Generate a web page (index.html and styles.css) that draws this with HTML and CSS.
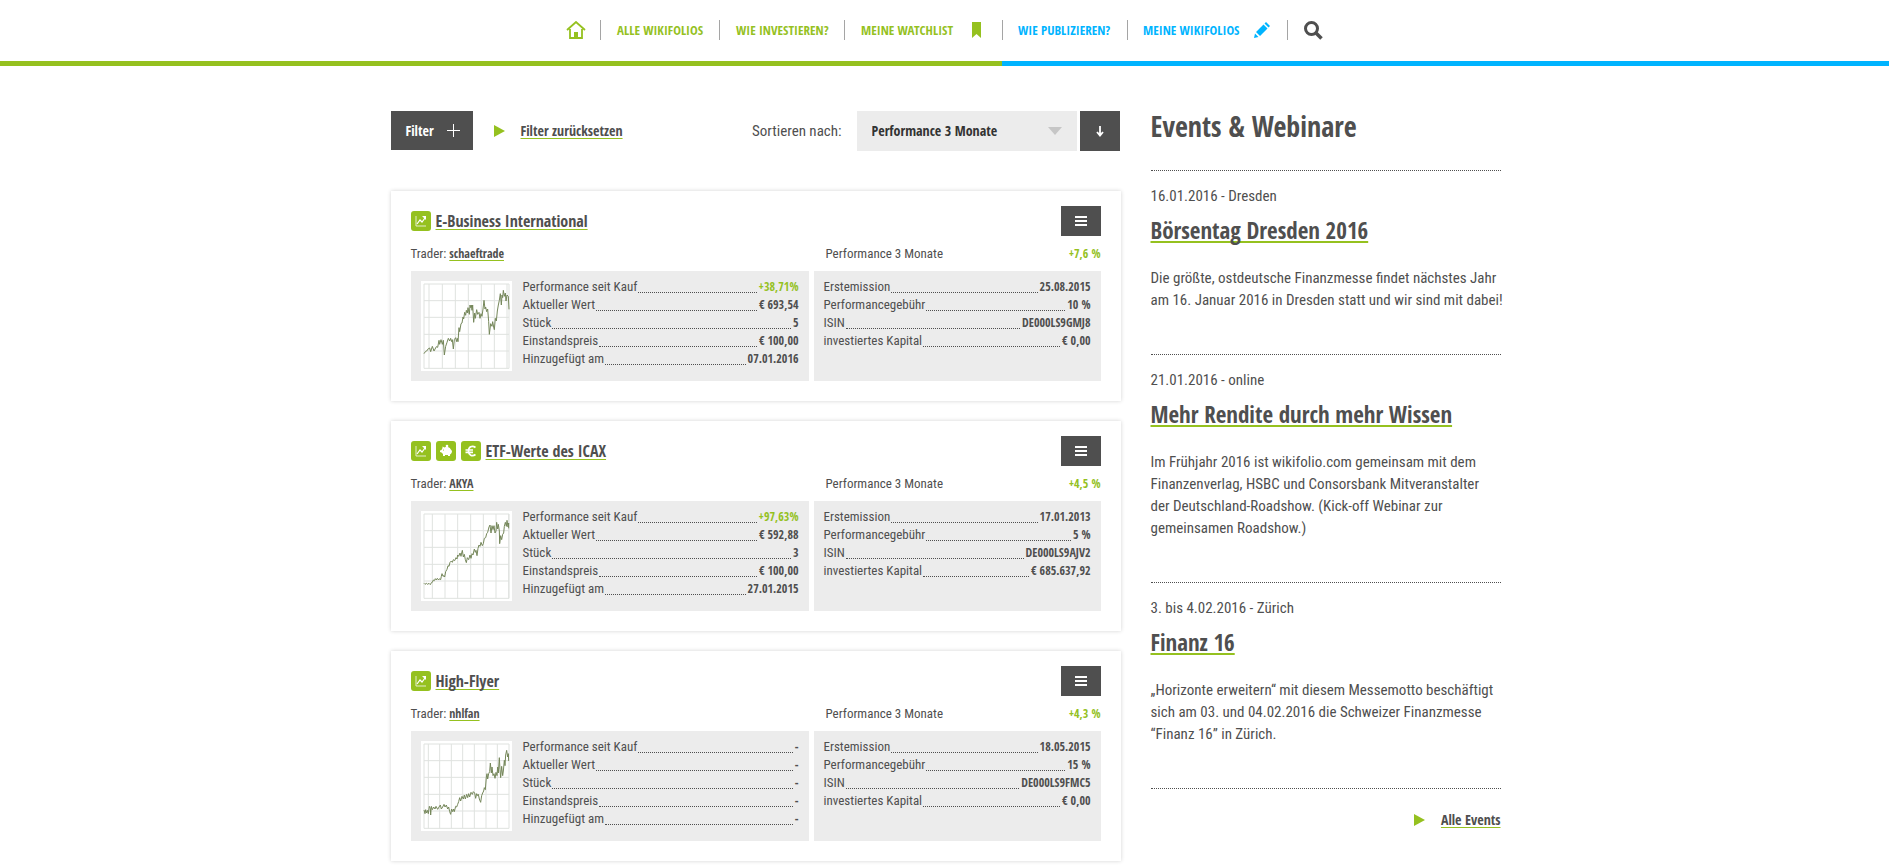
FILE: index.html
```html
<!DOCTYPE html>
<html lang="de">
<head>
<meta charset="utf-8">
<title>Meine Watchlist</title>
<link rel="stylesheet" href="styles.css">
</head>
<body>
<svg class="sprite" aria-hidden="true">
  <symbol id="trend" viewBox="0 0 20 20">
    <path d="M5 5v10h10" fill="none" stroke="#e4edcd" stroke-width="1"/>
    <path d="M6 13l3-4 2 2 3-4" fill="none" stroke="#fff" stroke-width="1.200"/>
    <path d="M11 5h4v4z" fill="#fff"/>
  </symbol>
  <symbol id="pig" viewBox="0 0 20 20">
    <path d="M4 9.500l1.500-.5 1-2V5.500l2 1c2-.8 5-.5 6 1.500l1.500 2c0 2-1 3-2 3.500V15h-2v-1h-3v1H7v-2l-1.500-1.500L4 11z" fill="#fff"/>
    <circle cx="11" cy="5" r="1.300" fill="#fff"/>
    <circle cx="7.500" cy="9" r=".6" fill="#95c11f"/>
  </symbol>
  <symbol id="euro" viewBox="0 0 20 20">
    <path d="M14.500 6.500C11 4 7.500 6 7.500 10s3.500 6 7 3.500M4.500 9H12M4.500 11.300H12" fill="none" stroke="#fff" stroke-width="1.700"/>
  </symbol>
  <symbol id="play" viewBox="0 0 11 12"><path d="M0 0l11 6-11 6z" fill="#95c11f"/></symbol>
  <symbol id="menu" viewBox="0 0 12 10"><path d="M0 1h12M0 5h12M0 9h12" stroke="#fff" stroke-width="2"/></symbol>
</svg>

<header class="header">
  <nav class="nav">
    <a class="nav-item nav-home" href="#" aria-label="Startseite"><svg width="20" height="18" viewBox="0 0 20 18"><path d="M1 9l9-8 9 8M4 8v9h12V8" fill="none" stroke="#95c11f" stroke-width="1.800"/><path d="M8 16v-5h4v5z" fill="#95c11f"/></svg></a>
    <a class="nav-item nav-all" href="#">ALLE WIKIFOLIOS</a>
    <a class="nav-item nav-how" href="#">WIE INVESTIEREN?</a>
    <a class="nav-item nav-watchlist" href="#">MEINE WATCHLIST <svg width="9" height="16" viewBox="0 0 9 16"><path d="M0 0h9v16l-4.500-4L0 16z" fill="#95c11f"/></svg></a>
    <a class="nav-item nav-how nav-blue" href="#">WIE PUBLIZIEREN?</a>
    <a class="nav-item nav-mine nav-blue" href="#">MEINE WIKIFOLIOS <svg width="16" height="16" viewBox="0 0 16 16"><path d="M2 10l7.500-7.500 4 4L6 14zM10.500 1.500L12 0l4 4-1.500 1.500zM1 11.500L4.500 15 0 16z" fill="#00b4ff"/></svg></a>
    <button class="nav-item nav-search" type="button" aria-label="Suche"><svg width="19" height="19" viewBox="0 0 19 19"><circle cx="7.500" cy="7.500" r="6" fill="none" stroke="#4f4f4f" stroke-width="3"/><path d="M12 12l5.500 5.500" stroke="#4f4f4f" stroke-width="3.600"/></svg></button>
  </nav>
</header>

<div class="page">
  <main class="main">
    <form class="toolbar">
      <button class="filter" type="button">Filter <svg width="13" height="13" viewBox="0 0 13 13"><path d="M0 6.500h13M6.500 0v13" stroke="#fff"/></svg></button>
      <svg class="play" width="11" height="12"><use href="#play"/></svg>
      <a class="link reset" href="#">Filter zurücksetzen</a>
      <label class="sort-label" for="sort">Sortieren nach:</label>
      <span class="select">
        <select id="sort"><option>Performance 3 Monate</option></select>
        <svg class="select-arrow" width="14" height="8" viewBox="0 0 14 8"><path d="M0 0h14L7 8z" fill="#c6c6c6"/></svg>
      </span>
      <button class="direction" type="button" aria-label="Absteigend"><svg width="8" height="11" viewBox="0 0 8 11"><path d="M4 0v9M1 6l3 3.500L7 6" fill="none" stroke="#fff" stroke-width="1.800"/></svg></button>
    </form>

    <article class="card">
      <div class="card-head">
        <svg class="badge"><use href="#trend"/></svg>
        <h2 class="card-title"><a class="link" href="#">E-Business International</a></h2>
        <button class="menu" type="button" aria-label="Menü"><svg width="12" height="10"><use href="#menu"/></svg></button>
      </div>
      <div class="card-meta">
        <p>Trader: <a class="link" href="#">schaeftrade</a></p>
        <p class="perf">Performance 3 Monate <b class="up">+7,6 %</b></p>
      </div>
      <div class="card-data">
        <div class="panel">
          <svg class="chart" viewBox="0 0 273 270">
            <path class="grid" d="M9 9h255v253H9zM9 59h255M9 109h255M9 160h255M9 210h255M24 9v253M64 9v253M103 9v253M142 9v253M181 9v253M220 9v253M258 9v253"/>
            <path class="line" d="M9 218L13 212 17 210 22 203 26 201 29 212 34 196 39 210 46 197 50 199 54 178 56 190 60 176 64 190 67 178 70 222 74 196 78 184 82 172 86 180 89 172 92 182 94 176 97 204 100 176 104 170 107 182 109 172 111 182 114 140 116 152 120 128 123 126 126 108 128 114 131 94 134 103 136 88 139 96 141 80 145 100 147 72 149 80 151 72 153 88 155 72 158 124 161 96 163 112 167 86 170 100 174 94 177 112 180 98 183 106 186 84 189 58 192 84 194 78 197 92 200 84 203 122 205 160 209 128 213 136 215 122 218 138 220 146 223 112 226 120 229 90 232 72 235 58 238 38 241 72 243 42 245 50 247 28 250 46 253 36 255 60 258 42 262 46 264 85"/>
          </svg>
          <dl class="list">
            <div><dt>Performance seit Kauf</dt><dd class="up">+38,71%</dd></div>
            <div><dt>Aktueller Wert</dt><dd>€ 693,54</dd></div>
            <div><dt>Stück</dt><dd>5</dd></div>
            <div><dt>Einstandspreis</dt><dd>€ 100,00</dd></div>
            <div><dt>Hinzugefügt am</dt><dd>07.01.2016</dd></div>
          </dl>
        </div>
        <div class="panel">
          <dl class="list">
            <div><dt>Erstemission</dt><dd>25.08.2015</dd></div>
            <div><dt>Performancegebühr</dt><dd>10 %</dd></div>
            <div><dt>ISIN</dt><dd>DE000LS9GMJ8</dd></div>
            <div><dt>investiertes Kapital</dt><dd>€ 0,00</dd></div>
          </dl>
        </div>
      </div>
    </article>

    <article class="card">
      <div class="card-head">
        <svg class="badge"><use href="#trend"/></svg>
        <svg class="badge"><use href="#pig"/></svg>
        <svg class="badge"><use href="#euro"/></svg>
        <h2 class="card-title"><a class="link" href="#">ETF-Werte des ICAX</a></h2>
        <button class="menu" type="button" aria-label="Menü"><svg width="12" height="10"><use href="#menu"/></svg></button>
      </div>
      <div class="card-meta">
        <p>Trader: <a class="link" href="#">AKYA</a></p>
        <p class="perf">Performance 3 Monate <b class="up">+4,5 %</b></p>
      </div>
      <div class="card-data">
        <div class="panel">
          <svg class="chart" viewBox="0 0 273 270">
            <path class="grid" d="M9 9h255v253H9zM9 59h255M9 109h255M9 160h255M9 210h255M34 9v253M72 9v253M110 9v253M149 9v253M187 9v253M225 9v253M263 9v253"/>
            <path class="line" d="M9 217L12 220 16 217 20 220 24 217 28 221 31 215 34 214 37 207 40 209 43 203 46 207 49 202 53 207 56 203 59 206 61 196 63 188 66 196 69 194 71 198 74 182 78 175 81 164 84 166 87 154 91 150 94 154 97 146 101 149 105 140 108 144 110 132 113 136 117 126 120 136 122 126 124 118 127 138 130 130 133 146 136 155 139 140 143 146 147 132 150 142 153 128 156 132 160 114 163 124 165 118 168 134 171 112 174 102 177 106 180 94 184 104 187 98 190 82 194 80 197 68 200 64 204 48 207 42 210 66 213 44 216 56 219 44 222 66 225 60 227 34 230 54 232 40 235 60 236 98 239 74 242 86 245 70 248 66 250 46 253 34 256 46 258 28 261 48 263 36 263 52"/>
          </svg>
          <dl class="list">
            <div><dt>Performance seit Kauf</dt><dd class="up">+97,63%</dd></div>
            <div><dt>Aktueller Wert</dt><dd>€ 592,88</dd></div>
            <div><dt>Stück</dt><dd>3</dd></div>
            <div><dt>Einstandspreis</dt><dd>€ 100,00</dd></div>
            <div><dt>Hinzugefügt am</dt><dd>27.01.2015</dd></div>
          </dl>
        </div>
        <div class="panel">
          <dl class="list">
            <div><dt>Erstemission</dt><dd>17.01.2013</dd></div>
            <div><dt>Performancegebühr</dt><dd>5 %</dd></div>
            <div><dt>ISIN</dt><dd>DE000LS9AJV2</dd></div>
            <div><dt>investiertes Kapital</dt><dd>€ 685.637,92</dd></div>
          </dl>
        </div>
      </div>
    </article>

    <article class="card">
      <div class="card-head">
        <svg class="badge"><use href="#trend"/></svg>
        <h2 class="card-title"><a class="link" href="#">High-Flyer</a></h2>
        <button class="menu" type="button" aria-label="Menü"><svg width="12" height="10"><use href="#menu"/></svg></button>
      </div>
      <div class="card-meta">
        <p>Trader: <a class="link" href="#">nhlfan</a></p>
        <p class="perf">Performance 3 Monate <b class="up">+4,3 %</b></p>
      </div>
      <div class="card-data">
        <div class="panel">
          <svg class="chart" viewBox="0 0 273 270">
            <path class="grid" d="M9 9h255v253H9zM9 59h255M9 109h255M9 160h255M9 210h255M22 9v253M56 9v253M91 9v253M125 9v253M160 9v253M195 9v253M229 9v253"/>
            <path class="line" d="M9 207L12 218 14 206 17 216 20 208 22 218 25 196 28 202 29 222 31 196 34 206 38 198 42 204 45 196 50 205 54 198 58 192 61 204 65 198 69 190 72 198 76 192 80 204 83 198 86 212 89 220 92 204 95 212 98 204 100 212 104 196 107 198 110 190 113 182 116 170 119 180 123 166 127 174 130 162 133 174 137 160 140 170 143 158 146 168 150 154 154 160 157 152 161 156 164 172 167 158 170 164 172 160 175 174 179 184 182 164 185 156 188 150 190 140 193 146 196 108 198 98 200 114 203 98 206 92 208 66 211 96 213 78 216 104 219 98 222 112 225 94 228 104 230 78 232 96 235 50 237 86 239 110 242 76 245 104 247 90 250 58 252 74 254 42 257 28 260 48 262 38 263 60"/>
          </svg>
          <dl class="list">
            <div><dt>Performance seit Kauf</dt><dd>-</dd></div>
            <div><dt>Aktueller Wert</dt><dd>-</dd></div>
            <div><dt>Stück</dt><dd>-</dd></div>
            <div><dt>Einstandspreis</dt><dd>-</dd></div>
            <div><dt>Hinzugefügt am</dt><dd>-</dd></div>
          </dl>
        </div>
        <div class="panel">
          <dl class="list">
            <div><dt>Erstemission</dt><dd>18.05.2015</dd></div>
            <div><dt>Performancegebühr</dt><dd>15 %</dd></div>
            <div><dt>ISIN</dt><dd>DE000LS9FMC5</dd></div>
            <div><dt>investiertes Kapital</dt><dd>€ 0,00</dd></div>
          </dl>
        </div>
      </div>
    </article>
  </main>

  <aside class="events">
    <h1 class="events-title">Events &amp; Webinare</h1>
    <section class="event">
      <p>16.01.2016 - Dresden</p>
      <h2 class="event-title"><a class="link" href="#">Börsentag Dresden 2016</a></h2>
      <p>Die größte, ostdeutsche Finanzmesse findet nächstes Jahr<br>am 16. Januar 2016 in Dresden statt und wir sind mit dabei!</p>
    </section>
    <section class="event">
      <p>21.01.2016 - online</p>
      <h2 class="event-title"><a class="link" href="#">Mehr Rendite durch mehr Wissen</a></h2>
      <p>Im Frühjahr 2016 ist wikifolio.com gemeinsam mit dem<br>Finanzenverlag, HSBC und Consorsbank Mitveranstalter<br>der Deutschland-Roadshow. (Kick-off Webinar zur<br>gemeinsamen Roadshow.)</p>
    </section>
    <section class="event">
      <p>3. bis 4.02.2016 - Zürich</p>
      <h2 class="event-title"><a class="link" href="#">Finanz 16</a></h2>
      <p>„Horizonte erweitern“ mit diesem Messemotto beschäftigt<br>sich am 03. und 04.02.2016 die Schweizer Finanzmesse<br>“Finanz 16” in Zürich.</p>
    </section>
    <p class="all-events"><svg width="11" height="12"><use href="#play"/></svg><a class="link" href="#">Alle Events</a></p>
  </aside>
</div>
</body>
</html>
```
FILE: styles.css
```css
:root {
  --bold-face: "Open Sans Condensed", "Roboto Condensed", "Liberation Sans Narrow", sans-serif;
}

* { box-sizing: border-box; margin: 0; padding: 0; }

body {
  background: #fff;
  color: #4f4f4f;
  font: 15px/22px "Roboto Condensed", "Liberation Sans Narrow", sans-serif;
}

button, select { border: 0; border-radius: 0; font: inherit; cursor: pointer; }

h1, h2, b, dd, .link, .nav-item, .filter, .select select {
  font-family: var(--bold-face);
  font-weight: bold;
}

.sprite { position: absolute; width: 0; height: 0; }

.link {
  color: inherit;
  text-decoration: underline 1px #95c11f;
  text-underline-offset: 2px;
  text-decoration-skip-ink: none;
}

.header { padding-top: 20px; }
.header::after {
  content: "";
  display: block;
  height: 5px;
  margin-top: 21px;
  background: linear-gradient(to right, #95c11f calc(50% + 58px), #00b4ff 0);
}

.nav { display: flex; justify-content: center; height: 20px; }
.nav-item {
  display: flex;
  align-items: center;
  justify-content: space-between;
  padding-left: 16px;
  border-left: 1px solid #a5a5a5;
  color: #95c11f;
  font-size: 13px;
  white-space: nowrap;
  text-decoration: none;
}
.nav-home { width: 34px; padding-left: 0; border-left: 0; }
.nav-all { width: 119px; }
.nav-how { width: 125px; }
.nav-watchlist { width: 158px; padding-right: 21px; }
.nav-mine { width: 160px; padding-right: 17px; }
.nav-blue { padding-left: 15px; color: #00b4ff; }
.nav-search { background: none; }

.page {
  display: flex;
  justify-content: space-between;
  max-width: 1112px;
  margin: 0 auto;
  padding: 45px 0 0 2px;
}

.main { width: 730px; }

.toolbar { display: flex; align-items: center; height: 40px; margin-bottom: 40px; padding-right: 1px; }
.filter {
  display: flex;
  align-items: center;
  justify-content: space-between;
  width: 82px;
  height: 39px;
  margin-bottom: 1px;
  padding: 0 13px 0 15px;
  background: #4f4f4f;
  color: #fff;
  font-size: 14px;
}
.play { margin: 0 16px 0 21px; }
.reset { font-size: 14px; }
.sort-label { margin-left: auto; }
.select { position: relative; margin: 0 3px 0 15px; }
.select select {
  appearance: none;
  display: block;
  width: 220px;
  height: 40px;
  padding-left: 15px;
  background: #ececec;
  color: #333;
  font-size: 14px;
}
.select-arrow { position: absolute; top: 16px; right: 15px; pointer-events: none; }
.direction, .menu { display: flex; align-items: center; justify-content: center; width: 40px; background: #4f4f4f; }
.direction { height: 40px; }

.card {
  margin-bottom: 20px;
  padding: 15px 20px 20px;
  box-shadow: 0 0 4px rgba(0, 0, 0, .18);
  font-size: 13px;
  line-height: 18px;
}
.card-head { display: flex; align-items: center; gap: 5px; height: 30px; }
.badge { width: 20px; height: 20px; border-radius: 3px; background: #95c11f; }
.card-title { font-size: 16px; line-height: 22px; }
.menu { height: 30px; margin-left: auto; }

.card-meta, .card-data { display: grid; grid-template-columns: 398fr 287fr; column-gap: 5px; }
.card-meta { padding: 9px 0 8px; }
.card-meta .link, .card-meta b { font-size: 12px; }
.perf { display: flex; justify-content: space-between; padding-left: 12px; }
.up { color: #95c11f; }

.panel { display: flex; gap: 11px; min-height: 110px; padding: 7px 10px; background: #ececec; }
.chart { width: 91px; height: 90px; margin-top: 3px; background: #fff; }
.grid { fill: none; stroke: #dfe2df; stroke-width: 3; }
.line { fill: none; stroke: #75875a; stroke-width: 3; stroke-linejoin: round; }
.list { flex: 1; }
.list div { display: flex; }
.list div::before { content: ""; order: 1; flex: 1; height: 14px; margin: 0 2px 0 1px; border-bottom: 1px dotted #4f4f4f; }
.list dd { order: 2; font-size: 12px; }

.events { width: 350px; white-space: nowrap; }
.events-title { margin-bottom: 29px; font-size: 28px; line-height: 30px; }
.event { padding: 14px 0 43px; border-top: 1px dotted #4f4f4f; }
.event-title { margin: 8px 0 22px; font-size: 23px; line-height: 30px; }
.event-title .link { text-decoration-thickness: 2px; }
.all-events {
  display: flex;
  align-items: center;
  justify-content: flex-end;
  gap: 16px;
  padding-top: 20px;
  border-top: 1px dotted #4f4f4f;
}
.all-events .link { font-size: 14px; }
```
